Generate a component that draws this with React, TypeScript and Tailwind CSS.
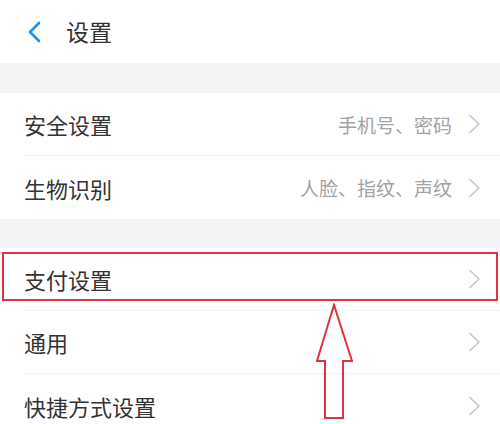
import React from 'react';

type Item = { label: string; value?: string };

const groups: Item[][] = [
  [
    { label: '安全设置', value: '手机号、密码' },
    { label: '生物识别', value: '人脸、指纹、声纹' },
  ],
  [{ label: '支付设置' }, { label: '通用' }, { label: '快捷方式设置' }],
];

const Chevron = () => (
  <svg width="13" height="20" viewBox="0 0 13 20" fill="none" className="shrink-0">
    <path d="M2 1.5 L11 10 L2 18.5" stroke="#c6c6c6" strokeWidth="1.5" strokeLinecap="round" strokeLinejoin="round" />
  </svg>
);

const Row = ({ item, last, highlight }: { item: Item; last: boolean; highlight?: boolean }) => (
  <div className="relative bg-white pl-[24px]">
    <div className={`h-[63px] flex items-center pr-[19px] ${last ? '' : 'border-b border-[#f0f0f0]'}`}>
      <span className="text-[22px] text-[#333333] flex-1 leading-none">{item.label}</span>
      {item.value && <span className="text-[19px] text-[#a3a3a3] mr-[16px] leading-none">{item.value}</span>}
      <Chevron />
    </div>
    {highlight && (
      <div className="absolute top-[4px] left-[2px] right-[2px] h-[49px] border-2 border-[#e0323c] pointer-events-none" />
    )}
  </div>
);

export default function App() {
  return (
    <div
      className="relative w-[500px] h-[424px] overflow-hidden bg-white"
      style={{ fontFamily: '"Noto Sans CJK SC", "Noto Sans", sans-serif' }}
    >
      <header className="h-[63px] flex items-center pl-[26px]">
        <svg width="16" height="22" viewBox="0 0 16 22" fill="none">
          <path d="M13 2 L4 11 L13 20" stroke="#1f8ee6" strokeWidth="2.6" strokeLinecap="round" strokeLinejoin="round" />
        </svg>
        <h1 className="ml-[24px] text-[23px] text-[#333333] leading-none">设置</h1>
      </header>

      {groups.map((g, gi) => (
        <div key={gi}>
          <div className={`${gi === 0 ? 'h-[30px]' : 'h-[29px]'} bg-[#f4f4f4]`} />
          {g.map((item, i) => (
            <Row key={item.label} item={item} last={i === g.length - 1} highlight={gi === 1 && i === 0} />
          ))}
        </div>
      ))}

      <svg className="absolute left-[315px] top-[303px]" width="40" height="118" viewBox="0 0 40 118" fill="none">
        <path d="M19 2 L37 58 L28 58 L28 115 L10 115 L10 58 L2 58 Z" stroke="#e0323c" strokeWidth="2" strokeLinejoin="miter" />
      </svg>
    </div>
  );
}
